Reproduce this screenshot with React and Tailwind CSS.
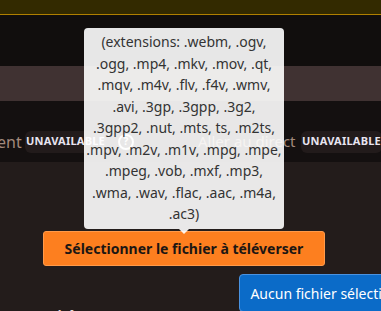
import React from 'react';

const Badge = ({ children }) => (
  <span className="inline-flex h-[22px] w-[81px] shrink-0 items-center justify-center rounded-md bg-[#221b1b] text-[11px] font-bold tracking-[0.02em] text-[#e8e4f0]">
    {children}
  </span>
);

const lines = [
  '(extensions: .webm, .ogv,',
  '.ogg, .mp4, .mkv, .mov, .qt,',
  '.mqv, .m4v, .flv, .f4v, .wmv,',
  '.avi, .3gp, .3gpp, .3g2,',
  '.3gpp2, .nut, .mts, ts, .m2ts,',
  '.mpv, .m2v, .m1v, .mpg, .mpe,',
  '.mpeg, .vob, .mxf, .mp3,',
  '.wma, .wav, .flac, .aac, .m4a,',
  '.ac3)',
];

export default function App() {
  return (
    <div
      className="relative h-[311px] w-[381px] overflow-hidden bg-[#231c1b]"
      style={{ fontFamily: '"Noto Sans", "Open Sans", sans-serif' }}
    >
      <div className="h-[15px] border-b border-[#b08000] bg-[#332a00]" />
      <div className="h-[51px] bg-[#110e0d]" />
      <div className="h-[35px] bg-[#403232]" />

      <div className="flex h-[61px] items-center whitespace-nowrap bg-[#141010] pt-[20px]">
        <span className="ml-[-3px] w-[28px] shrink-0 text-[16px] text-[#a38a7c]">ent</span>
        <Badge>UNAVAILABLE</Badge>
        <span className="ml-[12px] flex h-[16px] w-[16px] shrink-0 items-center justify-center rounded-full border-2 border-[#f4f0f0] text-[10px] font-bold text-[#f4f0f0]">
          ?
        </span>
        <span className="ml-[64px] w-[103px] shrink-0 text-[15px] text-[#a38a7c]">Aller au direct</span>
        <Badge>UNAVAILABLE</Badge>
      </div>

      <div className="pl-[43px] pt-[69px]">
        <button className="h-[35px] w-[282px] rounded-[3px] border border-[#ff9a4a] bg-[#fd7f1f] text-[14px] font-bold text-[#1c1613]">
          Sélectionner le fichier à téléverser
        </button>
      </div>

      <div className="mt-[8px] flex items-start whitespace-nowrap">
        <span className="ml-[48px] mt-[30px] text-[15px] font-semibold text-[#e0d8d8]">Chô</span>
        <button className="ml-[163px] h-[38px] rounded-[4px] border border-[#4a92e0] bg-[#0b6bc8] px-[10px] text-left text-[14px] text-white">
          Aucun fichier sélectionné
        </button>
      </div>

      <div className="absolute left-[84px] top-[28px] w-[200px] rounded-[4px] bg-white/90 pb-[4px] pt-[3px] text-center text-[14px] leading-[21.5px] whitespace-nowrap text-[#333]">
        {lines.map((l) => (
          <div key={l}>{l}</div>
        ))}
        <div className="absolute bottom-[-5px] left-[95px] h-0 w-0 border-x-[5px] border-t-[5px] border-x-transparent border-t-white/90" />
      </div>
    </div>
  );
}
